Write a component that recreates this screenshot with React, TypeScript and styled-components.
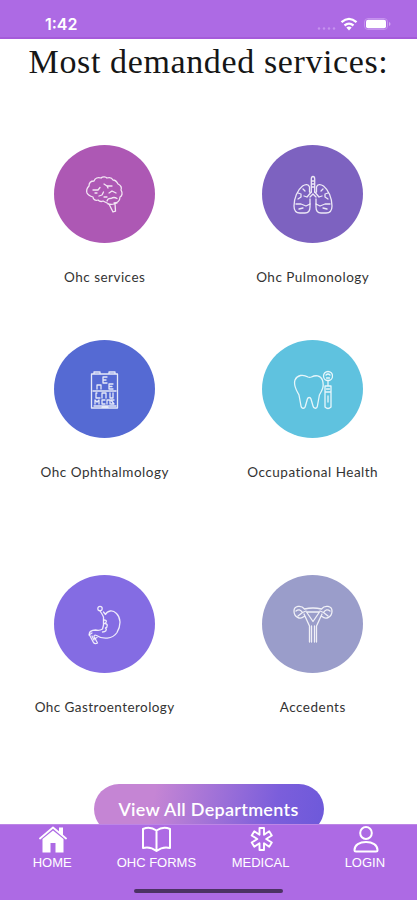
import React from 'react';
import styled, { createGlobalStyle } from 'styled-components';

const GlobalStyle = createGlobalStyle`
  * { box-sizing: border-box; }
  body { margin: 0; background: #fff; overflow: hidden; }
`;

const Screen = styled.div`
  width: 417px;
  height: 900px;
  display: flex;
  flex-direction: column;
  background: #fff;
  overflow: hidden;
`;

const StatusBar = styled.header`
  flex: none;
  height: 39px;
  padding: 10px 26px 0 45px;
  display: flex;
  justify-content: space-between;
  background: #ad6ae4;
  border-bottom: 2px solid #a55bda;
`;

const Time = styled.span`
  font: 600 16px/28px Inter, sans-serif;
  letter-spacing: 0;
  color: #fff;
`;

const StatusIcons = styled.svg`
  width: 76px;
  height: 28px;
`;

const Content = styled.main`
  flex: 1;
  min-height: 0;
  overflow: hidden;
  display: flex;
  flex-direction: column;
  align-items: center;
`;

const Title = styled.h1`
  margin: 3px 0 0;
  height: 103px;
  flex: none;
  white-space: nowrap;
  font: 400 34px/40px "Liberation Serif", serif;
  letter-spacing: 0.62px;
  color: #161616;
`;

const Services = styled.section`
  flex: none;
  width: 417px;
  height: 639px;
  display: grid;
  grid-template-columns: 209px 207px;
  grid-template-rows: 195px 234.5px 1fr;
`;

const Service = styled.article`
  display: flex;
  flex-direction: column;
  align-items: center;
`;

const Disc = styled.div<{ $fill: string }>`
  width: 101px;
  height: 98px;
  border-radius: 50%;
  background: ${(p) => p.$fill};
  display: flex;
  align-items: center;
  justify-content: center;
`;

const Glyph = styled.svg`
  width: 40px;
  height: 40px;
  margin-top: 2px;
  fill: none;
  stroke: #fff;
  stroke-opacity: 0.85;
  stroke-width: 1.3;
  stroke-linecap: round;
  stroke-linejoin: round;
`;

const Label = styled.span<{ $track: number }>`
  margin-top: 24px;
  font: 400 13.5px/20px Lato, sans-serif;
  letter-spacing: ${(p) => p.$track}px;
  margin-right: ${(p) => -p.$track}px;
  white-space: nowrap;
  color: #333;
`;

const AllButton = styled.button`
  flex: none;
  width: 230px;
  height: 50px;
  border: 0;
  border-radius: 25px;
  background: linear-gradient(100deg, #c585d4 0%, #c585d4 26%, #7b5edb 78%, #6d59da 100%);
  color: #fff;
  font: 600 18px/50px Lato, sans-serif;
  letter-spacing: 0.3px;
  padding: 0;
  white-space: nowrap;
`;

const TabBar = styled.nav`
  flex: none;
  height: 76px;
  background: #ad6ae4;
  border-top: 1px solid #bd86e6;
  display: flex;
  flex-direction: column;
  align-items: center;
`;

const Tabs = styled.div`
  height: 64px;
  width: 417px;
  display: grid;
  grid-template-columns: repeat(4, 1fr);
`;

const Tab = styled.a`
  display: flex;
  flex-direction: column;
  align-items: center;
  color: #fff;
  font: 400 13px/16px "Liberation Sans", sans-serif;
  white-space: nowrap;
`;

const TabIcon = styled.svg`
  width: 30px;
  height: 28px;
  margin-bottom: 2px;
  fill: none;
  stroke: #fff;
  stroke-width: 2;
  stroke-linecap: round;
  stroke-linejoin: round;
`;

const HomeIndicator = styled.div`
  width: 149px;
  height: 4px;
  border-radius: 2px;
  background: #4c3264;
`;

const Brain = (
  <>
    <path d="M18 26c-2 1-4 0-5-1-3 1-5-1-5-3-3-1-5-2-6-4-1-3 0-5 2-7 0-3 2-5 5-5 1-3 4-4 7-3 2-2 5-1 6 0 3-1 5 0 6 2 3 0 4 2 5 4 3 1 4 4 3 6 2 3 1 6-1 7 0 4-3 6-6 6M18 26l6 3 4 8 2.500-.8-.5-8M22 26q1-3 4-2.500 3-2 6 0M23 29q5 1 9-1" />
    <path d="M8 15h5l2-2.500M10 18h2M19 9l3 2h5M22 11l1 2M14 21l3-1 1.500-3M24 18l3-2 4 2M19 22h3" />
  </>
);

const Lungs = (
  <>
    <path d="M18.300 17V4q0-2.500 1.700-2.500T21.700 4v13M18.500 6h3M18.500 9h3M18.500 12h3" />
    <path d="M16.500 17v-5c-1-3-4-3-7-1-5 4-8.500 12-8.500 20 0 5 2 7 6 7h5c3 0 5-2 5-6v-8M23.500 17v-5c1-3 4-3 7-1 5 4 8.500 12 8.500 20 0 5-2 7-6 7h-5c-3 0-5-2-5-6v-8M18.300 17l-4.300 5M21.700 17l4.300 5M17 22l3-3 3 3M14 22l-3-1M26 22l3-1" />
    <path d="M5 18l3 1v3l-3 2M35 18l-3 1v3l3 2M10 14l2 2M30 14l-2 2M3 29h5l5 2 4-2M37 29h-5l-5 2-4-2M6 34l4-1M34 34l-4-1" />
  </>
);

const EyeChart = (
  <>
    <path d="M6.500 4h26v34h-26zM9 4V2h6v2M24 4V2h6v2M9 36h22M8 21h23M17 37.500h6" />
    <path d="M22 7h-4v6h4M18 10h3M12 19v-4h4v4M28 14h-4v5h4M24 16.500h3M12 23h-1v5h4M17 28v-5h4v5M25 23v5h3v-5M10 34v-4l2 2 2-2v4M20 30h-3v4h3M22 34v-4h3v4M29 30h-3l3 4h-3" />
  </>
);

const Tooth = (
  <>
    <path d="M15 7C10 4 4 5 2 10c-2 6 2 11 4 15l2 11c.4 3 4 3 4.400 0l2-7c.6-2 3-2 3.600 0l2 7c.6 3 4 3 4.400 0l2-11c3-5 5-9 3-15-2-5-7-5-11-3-1.500.5-2 .5-3.400 0z" />
    <circle cx="35" cy="6" r="4.500" />
    <path d="M33 5q2-2 4 0M33.500 8h3M35 11v5M32 16h6v21q-3 3-6 0zM32 22h6M35 26v6M33.500 19h3" />
  </>
);

const Stomach = (
  <>
    <circle cx="15" cy="3.500" r="2.200" />
    <path d="M15 6l2 3 1.500 3v8l-1 4q-3 2-7 1c-4 0-7 2-6 5l4 7.500q1.500 2 4 .5l-3.500-6.500q0-2 2.500-1c6 4 16 4 20.500-3 4.500-8 3.500-15-.500-19-4-4-9-3-11 1l-2-2.500" />
    <path d="M19 15c4 0 2 3 .5 3.500 4 0 3 4 1 4.500 2 2 0 4-3 4M7 28l-3 2M9 34l3-1.500M7 31l2 4" />
  </>
);

const Uterus = (
  <>
    <path d="M11.500 4q8.500-2 17 0M11.500 4C8-.5 1 1 1 6c0 6 6 9 10 5.500M28.500 4C32-.5 39 1 39 6c0 6-6 9-10 5.500M11 9l5.500 12v16M29 9l-5.500 12v16" />
    <path d="M13.500 7h13L20 16.500zM18.500 21v16M21.500 21v16" />
    <path d="M3 6q3.500-3 6.500 1.500L5 11M37 6q-3.500-3-6.500 1.500L35 11M9.500 7.500L13 6M30.500 7.500L27 6" />
  </>
);

const services = [
  { name: 'Ohc services', fill: '#ad58b4', icon: Brain, track: 0.48 },
  { name: 'Ohc Pulmonology', fill: '#7d62c0', icon: Lungs, track: 0.5 },
  { name: 'Ohc Ophthalmology', fill: '#556ad3', icon: EyeChart, track: 0.52 },
  { name: 'Occupational Health', fill: '#5fc2df', icon: Tooth, track: 0.5 },
  { name: 'Ohc Gastroenterology', fill: '#846ce3', icon: Stomach, track: 0.44 },
  { name: 'Accedents', fill: '#9a9dca', icon: Uterus, track: 0.5 },
];

const tabs = [
  {
    name: 'HOME',
    icon: (
      <g stroke="none" fill="#fff">
        <path d="M5.500 14L16 5.500 26.500 14v13.500h-8V18h-5v9.500h-8z" />
        <path d="M3 13.500L16 2.500 29 13.500" fill="none" stroke="#fff" strokeWidth="1.800" />
        <path d="M22 2.500h4v8.500l-4-3.500z" />
      </g>
    ),
  },
  {
    name: 'OHC FORMS',
    icon: <path d="M15.500 5.500Q9 1 2 4v19q7-2 13.500 3Q22 21 29 23V4q-7-3-13.500 1.500zv20.500" />,
  },
  {
    name: 'MEDICAL',
    icon: (
      <path
        strokeWidth="1.900"
        d="M13.500 3h4.500v6.700l5.200-3.400 2.600 4.200-5.600 3.500 5.600 3.500-2.600 4.200-5.200-3.400V25h-4.500v-6.700l-5.200 3.400-2.600-4.200 5.600-3.500-5.600-3.500 2.600-4.200 5.200 3.400z"
      />
    ),
  },
  {
    name: 'LOGIN',
    icon: (
      <>
        <ellipse cx="16" cy="8" rx="5.800" ry="6" />
        <path d="M4.500 25c0-5 5-8 11.500-8s11.500 3 11.500 8q0 1.500-1.500 1.500H6q-1.500 0-1.500-1.500z" />
      </>
    ),
  },
];

export default function App() {
  return (
    <Screen>
      <GlobalStyle />
      <StatusBar>
        <Time>1:42</Time>
        <StatusIcons viewBox="0 0 76 28">
          <g fill="#c592ee">
            <circle cx="4" cy="18.500" r="1.200" />
            <circle cx="9" cy="18.500" r="1.200" />
            <circle cx="14" cy="18.500" r="1.200" />
            <circle cx="19" cy="18.500" r="1.200" />
          </g>
          <g fill="none" stroke="#fff" strokeWidth="2.300">
            <path d="M26.500 12.200Q34 5.500 41.500 12.200" />
            <path d="M29.500 15.500Q34 11.800 38.500 15.500" />
          </g>
          <path d="M31.300 17.500Q34 15.500 36.700 17.500L34 20.500z" fill="#fff" />
          <rect x="49.500" y="8.500" width="23" height="11" rx="3.500" fill="none" stroke="#c592ee" />
          <rect x="51" y="9.700" width="20" height="8.600" rx="2" fill="#fff" />
          <path d="M74 12v4q1.500-.5 1.500-2T74 12z" fill="#d2a9f1" />
        </StatusIcons>
      </StatusBar>
      <Content>
        <Title>Most demanded services:</Title>
        <Services>
          {services.map((s) => (
            <Service key={s.name}>
              <Disc $fill={s.fill}>
                <Glyph viewBox="0 0 40 40">{s.icon}</Glyph>
              </Disc>
              <Label $track={s.track}>{s.name}</Label>
            </Service>
          ))}
        </Services>
        <AllButton>View All Departments</AllButton>
      </Content>
      <TabBar>
        <Tabs>
          {tabs.map((t) => (
            <Tab key={t.name}>
              <TabIcon viewBox="0 0 30 28">{t.icon}</TabIcon>
              {t.name}
            </Tab>
          ))}
        </Tabs>
        <HomeIndicator />
      </TabBar>
    </Screen>
  );
}
